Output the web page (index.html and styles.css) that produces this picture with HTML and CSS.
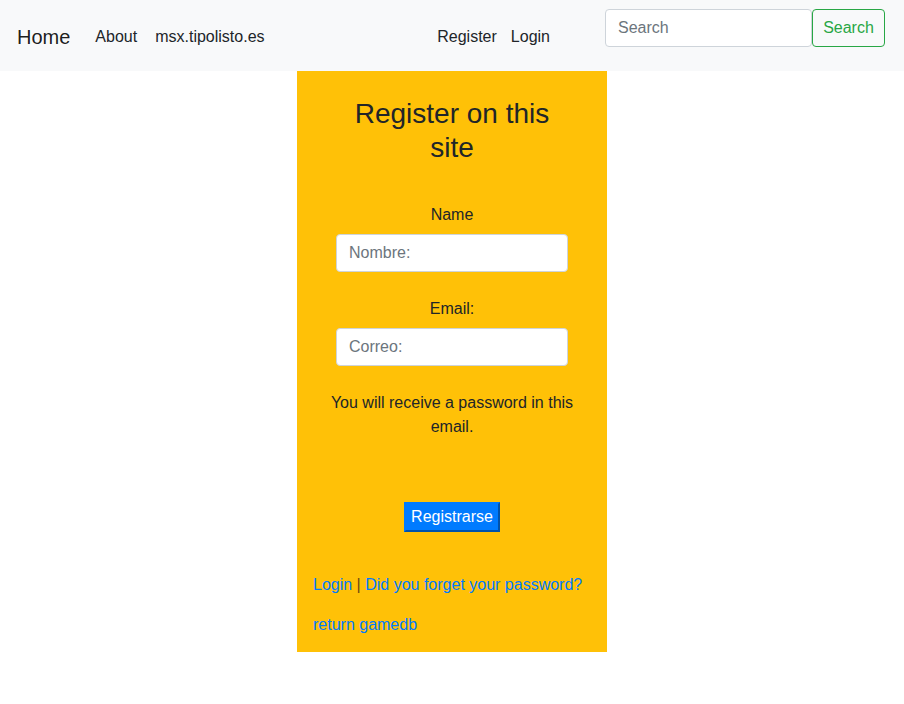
FILE: index.html
```html
<!DOCTYPE html>
<html lang="en">
<head>
<meta charset="utf-8">
<title>Register</title>
<link rel="stylesheet" href="styles.css">
</head>
<body>
<nav class="navbar">
  <a class="brand" href="#">Home</a>
  <ul class="nav nav-left">
    <li><a class="nav-link" href="#">About</a></li>
    <li><a class="nav-link" href="#">msx.tipolisto.es</a></li>
  </ul>
  <ul class="nav nav-right">
    <li><a class="nav-link tight" href="#">Register</a></li>
    <li><a class="nav-link tight" href="#">Login</a></li>
  </ul>
  <form class="search">
    <input class="search-input" type="search" placeholder="Search">
    <button class="search-btn" type="button">Search</button>
  </form>
</nav>

<main class="panel">
  <h3 class="title">Register on this site</h3>
  <form class="reg-form">
    <div class="group">
      <label class="label" for="name">Name</label>
      <input class="field" id="name" type="text" placeholder="Nombre:">
    </div>
    <div class="group group-last">
      <label class="label" for="email">Email:</label>
      <input class="field" id="email" type="email" placeholder="Correo:">
    </div>
    <p class="note">You will receive a password in this email.</p>
    <div class="actions">
      <button class="submit" type="button">Registrarse</button>
    </div>
  </form>
  <p class="links links-first"><a href="#">Login</a> <span class="sep">|</span> <a href="#">Did you forget your password?</a></p>
  <p class="links links-last"><a href="#">return gamedb</a></p>
</main>
</body>
</html>
```
FILE: styles.css
```css
* { box-sizing: border-box; }

body {
  margin: 0;
  font-family: "Liberation Sans", Arial, sans-serif;
  font-size: 16px;
  line-height: 24px;
  color: #212529;
  background: #fff;
}

a { text-decoration: none; }

.navbar {
  display: flex;
  align-items: center;
  height: 71px;
  padding: 2px 19px 0 17px;
  background: #f8f9fa;
}

.brand {
  font-size: 20px;
  line-height: 30px;
  color: rgba(0, 0, 0, 0.9);
  margin-right: 16px;
}

.nav {
  display: flex;
  list-style: none;
  margin: 0;
  padding: 0;
}

.nav-link {
  display: block;
  padding: 0 9px;
  color: #212529;
}

.nav-link.tight { padding: 0 7px; }

.nav-right { margin-left: auto; }

.search {
  display: flex;
  align-self: flex-start;
  margin: 7px 0 0 48px;
}

.search-input {
  width: 207px;
  height: 38px;
  padding: 6px 12px;
  font: inherit;
  line-height: 24px;
  color: #495057;
  background: #fff;
  border: 1px solid #ced4da;
  border-radius: 4px;
  outline: none;
}

.search-input::placeholder, .field::placeholder { color: #6c757d; }

.search-btn {
  width: 73px;
  height: 38px;
  padding: 0;
  font: inherit;
  color: #28a745;
  background: transparent;
  border: 1px solid #28a745;
  border-radius: 4px;
}

.panel {
  display: flex;
  flex-direction: column;
  width: 310px;
  margin: 0 auto;
  padding: 26px 16px 0;
  background: #ffc107;
}

.title {
  max-width: 232px;
  margin: 0 auto;
  font-size: 28px;
  line-height: 33.6px;
  font-weight: 500;
  text-align: center;
  color: #212529;
}

.reg-form {
  display: flex;
  flex-direction: column;
  align-items: center;
  margin-top: 39px;
  text-align: center;
}

.group { margin-bottom: 25px; }
.group-last { margin-bottom: 25px; }

.label {
  display: block;
  margin-bottom: 7px;
}

.field {
  display: block;
  width: 232px;
  height: 38px;
  padding: 6px 12px;
  font: inherit;
  line-height: 24px;
  color: #495057;
  background: #fff;
  border: 1px solid #ced4da;
  border-radius: 4px;
  outline: none;
}

.note { margin: 0; }

.actions { margin-top: 63px; }

.submit {
  padding: 1px 5px;
  font: inherit;
  line-height: 24px;
  color: #fff;
  background: #007bff;
  border: 2px outset #007bff;
}

.links { margin: 0 0 16px; }
.links-first { margin-top: 41px; }
.links-last { margin-bottom: 15px; }

.links a { color: #007bff; }

.sep { color: #6b4a12; }
```
